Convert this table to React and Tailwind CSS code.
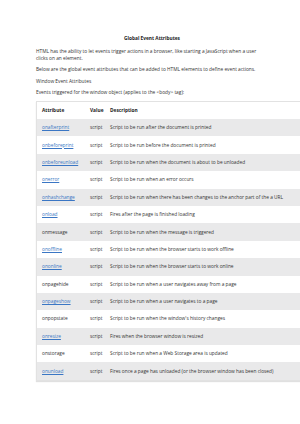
import React from 'react';

const rows = [
    { name: 'onafterprint', link: true, desc: 'Script to be run after the document is printed' },
    { name: 'onbeforeprint', link: true, desc: 'Script to be run before the document is printed' },
    { name: 'onbeforeunload', link: true, desc: 'Script to be run when the document is about to be unloaded' },
    { name: 'onerror', link: true, desc: 'Script to be run when an error occurs' },
    { name: 'onhashchange', link: true, desc: 'Script to be run when there has been changes to the anchor part of the a URL' },
    { name: 'onload', link: true, desc: 'Fires after the page is finished loading' },
    { name: 'onmessage', link: false, desc: 'Script to be run when the message is triggered' },
    { name: 'onoffline', link: true, desc: 'Script to be run when the browser starts to work offline' },
    { name: 'ononline', link: true, desc: 'Script to be run when the browser starts to work online' },
    { name: 'onpagehide', link: false, desc: 'Script to be run when a user navigates away from a page' },
    { name: 'onpageshow', link: true, desc: 'Script to be run when a user navigates to a page' },
    { name: 'onpopstate', link: false, desc: "Script to be run when the window's history changes" },
    { name: 'onresize', link: true, desc: 'Fires when the browser window is resized' },
    { name: 'onstorage', link: false, desc: 'Script to be run when a Web Storage area is updated' },
    { name: 'onunload', link: true, desc: 'Fires once a page has unloaded (or the browser window has been closed)' },
];

export default function App() {
    return (
        <div className="w-[300px] h-[424px] bg-white overflow-hidden text-[#333] text-[4.8px] leading-[7px] font-['Open_Sans',sans-serif]">
            {/* Titre */}
            <div className="pt-[35px] text-center font-bold text-[#222] pl-[4px]">Global Event Attributes</div>

            <div className="pl-[36px] pr-[38px] pt-[6px]">
                <p>HTML has the ability to let events trigger actions in a browser, like starting a JavaScript when a user clicks on an element.</p>
                <p className="mt-[4px]">Below are the global event attributes that can be added to HTML elements to define event actions.</p>
                <p className="mt-[5px]">Window Event Attributes</p>
                <p className="mt-[4px]">Events triggered for the window object (applies to the &lt;body&gt; tag):</p>
            </div>

            {/* Tableau */}
            <div className="ml-[36px] mt-[5px] w-[270px] border border-[#e2e2e2] shadow-[0_1px_1px_rgba(0,0,0,0.12)]">
                <div className="flex items-center h-[17px] font-bold text-[#222]">
                    <div className="w-[53px] pl-[5px]">Attribute</div>
                    <div className="w-[20px]">Value</div>
                    <div>Description</div>
                </div>
                {rows.map((row, idx) => (
                    <div key={row.name} className={`flex items-center h-[17.4px] ${idx % 2 === 0 ? 'bg-[#e9e9ea]' : 'bg-white'}`}>
                        <div className={`w-[53px] pl-[5px] ${row.link ? 'text-[#3a76c4] underline' : ''}`}>{row.name}</div>
                        <div className="w-[20px]">script</div>
                        <div className="whitespace-nowrap">{row.desc}</div>
                    </div>
                ))}
            </div>
        </div>
    );
}
